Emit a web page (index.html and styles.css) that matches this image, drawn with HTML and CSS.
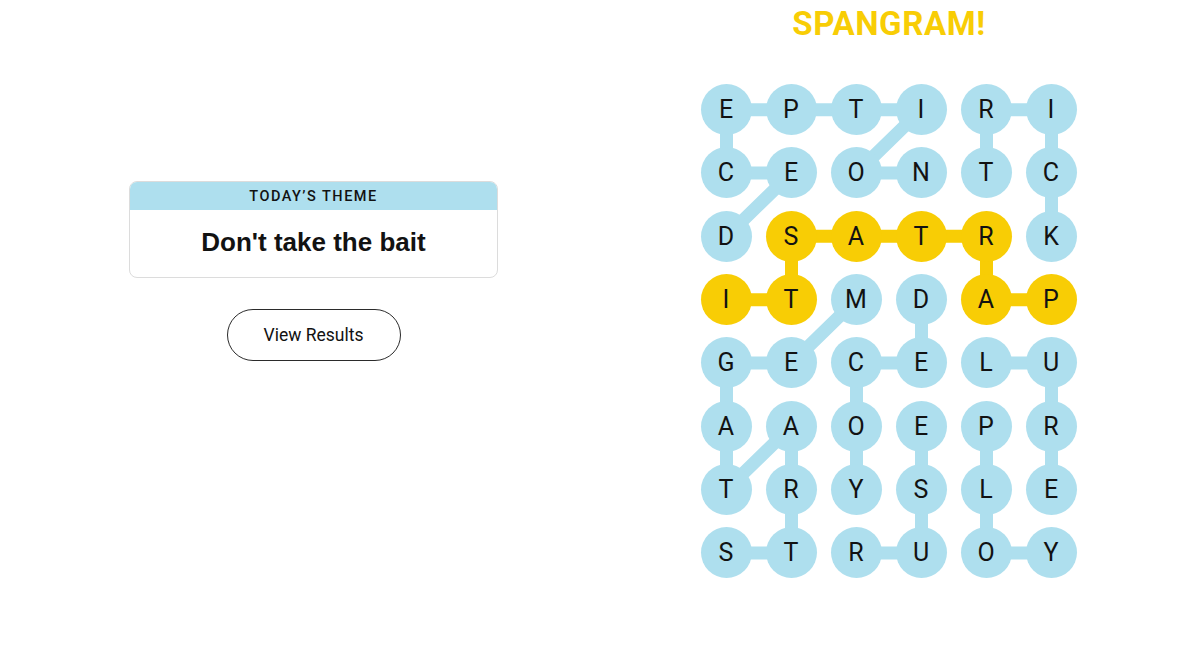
FILE: index.html
```html
<!DOCTYPE html>
<html lang="en">
<head>
<meta charset="utf-8">
<title>Strands</title>
<link rel="stylesheet" href="styles.css">
</head>
<body>
<main class="page">
  <section class="left">
    <div class="theme-card">
      <div class="theme-head">TODAY’S THEME</div>
      <div class="theme-body">Don't take the bait</div>
    </div>
    <button class="results-btn">View Results</button>
  </section>
  <section class="right">
    <h1 class="spangram-title">SPANGRAM!</h1>
    <div class="board">
      <svg class="links" viewBox="0 0 390 506.67" width="390" height="506.67" aria-hidden="true">
        <g class="blue">
          <polyline points="32.5,31.67 227.5,31.67 162.5,95 227.5,95"/>
          <polyline points="32.5,31.67 32.5,95 97.5,95 32.5,158.33"/>
          <polyline points="292.5,95 292.5,31.67 357.5,31.67 357.5,158.33"/>
          <polyline points="32.5,475 97.5,475 97.5,348.33 32.5,411.67 32.5,285 97.5,285 162.5,221.67"/>
          <polyline points="227.5,221.67 227.5,285 162.5,285 162.5,411.67"/>
          <polyline points="162.5,475 227.5,475 227.5,348.33"/>
          <polyline points="292.5,348.33 292.5,475 357.5,475"/>
          <polyline points="292.5,285 357.5,285 357.5,411.67"/>
        </g>
        <g class="yellow">
          <polyline points="32.5,221.67 97.5,221.67 97.5,158.33 292.5,158.33 292.5,221.67 357.5,221.67"/>
        </g>
      </svg>
      <div class="cell"><span class="dot">E</span></div>
      <div class="cell"><span class="dot">P</span></div>
      <div class="cell"><span class="dot">T</span></div>
      <div class="cell"><span class="dot">I</span></div>
      <div class="cell"><span class="dot">R</span></div>
      <div class="cell"><span class="dot">I</span></div>

      <div class="cell"><span class="dot">C</span></div>
      <div class="cell"><span class="dot">E</span></div>
      <div class="cell"><span class="dot">O</span></div>
      <div class="cell"><span class="dot">N</span></div>
      <div class="cell"><span class="dot">T</span></div>
      <div class="cell"><span class="dot">C</span></div>

      <div class="cell"><span class="dot">D</span></div>
      <div class="cell"><span class="dot gold">S</span></div>
      <div class="cell"><span class="dot gold">A</span></div>
      <div class="cell"><span class="dot gold">T</span></div>
      <div class="cell"><span class="dot gold">R</span></div>
      <div class="cell"><span class="dot">K</span></div>

      <div class="cell"><span class="dot gold">I</span></div>
      <div class="cell"><span class="dot gold">T</span></div>
      <div class="cell"><span class="dot">M</span></div>
      <div class="cell"><span class="dot">D</span></div>
      <div class="cell"><span class="dot gold">A</span></div>
      <div class="cell"><span class="dot gold">P</span></div>

      <div class="cell"><span class="dot">G</span></div>
      <div class="cell"><span class="dot">E</span></div>
      <div class="cell"><span class="dot">C</span></div>
      <div class="cell"><span class="dot">E</span></div>
      <div class="cell"><span class="dot">L</span></div>
      <div class="cell"><span class="dot">U</span></div>

      <div class="cell"><span class="dot">A</span></div>
      <div class="cell"><span class="dot">A</span></div>
      <div class="cell"><span class="dot">O</span></div>
      <div class="cell"><span class="dot">E</span></div>
      <div class="cell"><span class="dot">P</span></div>
      <div class="cell"><span class="dot">R</span></div>

      <div class="cell"><span class="dot">T</span></div>
      <div class="cell"><span class="dot">R</span></div>
      <div class="cell"><span class="dot">Y</span></div>
      <div class="cell"><span class="dot">S</span></div>
      <div class="cell"><span class="dot">L</span></div>
      <div class="cell"><span class="dot">E</span></div>

      <div class="cell"><span class="dot">S</span></div>
      <div class="cell"><span class="dot">T</span></div>
      <div class="cell"><span class="dot">R</span></div>
      <div class="cell"><span class="dot">U</span></div>
      <div class="cell"><span class="dot">O</span></div>
      <div class="cell"><span class="dot">Y</span></div>
    </div>
  </section>
</main>
</body>
</html>
```
FILE: styles.css
```css
* { box-sizing: border-box; }

html, body {
  margin: 0;
  padding: 0;
  background: #ffffff;
}

body {
  font-family: Roboto, "Liberation Sans", Arial, sans-serif;
  color: #121212;
}

.page {
  display: flex;
  width: 1188px;
  height: 660px;
}

.left {
  width: 627px;
  display: flex;
  flex-direction: column;
  align-items: center;
  padding-top: 181px;
}

.theme-card {
  width: 369px;
  border: 1px solid #dcdcdc;
  border-radius: 8px;
  overflow: hidden;
}

.theme-head {
  height: 28px;
  background: #aedfee;
  display: flex;
  align-items: center;
  justify-content: center;
  font-size: 14.5px;
  font-weight: 500;
  letter-spacing: 1.5px;
  color: #121212;
  padding-top: 0;
}

.theme-body {
  height: 67px;
  display: flex;
  align-items: center;
  justify-content: center;
  font-family: "Liberation Sans", Arial, sans-serif;
  font-size: 26px;
  font-weight: 700;
  color: #121212;
  padding-bottom: 2px;
}

.results-btn {
  margin-top: 31px;
  width: 174px;
  height: 52px;
  border: 1px solid #2b2b2b;
  border-radius: 26px;
  background: #ffffff;
  font-family: Roboto, "Liberation Sans", Arial, sans-serif;
  font-size: 17.5px;
  color: #121212;
  padding: 0;
}

.right {
  width: 523px;
  display: flex;
  flex-direction: column;
  align-items: center;
}

.spangram-title {
  margin: 0;
  font-size: 33px;
  line-height: 48px;
  font-weight: 700;
  color: #f8cd05;
  letter-spacing: 0.6px;
  padding-left: 1px;
}

.board {
  position: relative;
  margin-top: 30px;
  width: 390px;
  display: grid;
  grid-template-columns: repeat(6, 65px);
  grid-template-rows: repeat(8, 63.333px);
}

.links {
  position: absolute;
  left: 0;
  top: 0;
  z-index: 0;
}

.links polyline {
  fill: none;
  stroke-width: 13;
  stroke-linejoin: round;
  stroke-linecap: butt;
}

.links .blue polyline { stroke: #aedfee; }
.links .yellow polyline { stroke: #f8cd05; }

.cell {
  position: relative;
  z-index: 1;
  display: flex;
  align-items: center;
  justify-content: center;
}

.dot {
  width: 51px;
  height: 51px;
  border-radius: 50%;
  background: #aedfee;
  display: flex;
  align-items: center;
  justify-content: center;
  font-size: 25px;
  font-weight: 400;
  color: #121212;
}

.dot.gold { background: #f8cd05; }
```
